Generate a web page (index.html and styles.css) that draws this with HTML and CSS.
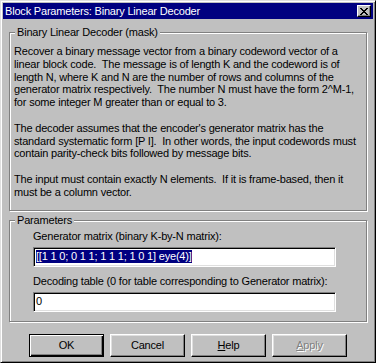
FILE: index.html
```html
<!DOCTYPE html>
<html lang="en">
<head>
  <meta charset="UTF-8">
  <title>Block Parameters: Binary Linear Decoder</title>
  <link rel="stylesheet" href="styles.css">
</head>
<body>
  <div class="window">
    <!-- title bar -->
    <div class="titlebar">
      <span class="title">Block Parameters: Binary Linear Decoder</span>
      <span class="close-btn">
        <svg width="8" height="7" viewBox="0 0 8 7" shape-rendering="crispEdges">
          <path fill="#000" d="M0 0h2v1H0zM6 0h2v1H6zM1 1h2v1H1zM5 1h2v1H5zM2 2h4v1H2zM3 3h2v1H3zM2 4h4v1H2zM1 5h2v1H1zM5 5h2v1H5zM0 6h2v1H0zM6 6h2v1H6z"/>
        </svg>
      </span>
    </div>

    <!-- mask description -->
    <fieldset class="group group-desc">
      <legend>Binary Linear Decoder (mask)</legend>
      <p>Recover a binary message vector from a binary codeword vector of a<br>
        linear block code.&nbsp; The message is of length K and the codeword is of<br>
        length N, where K and N are the number of rows and columns of the<br>
        generator matrix respectively.&nbsp; The number N must have the form 2^M-1,<br>
        for some integer M greater than or equal to 3.</p>
      <p>The decoder assumes that the encoder's generator matrix has the<br>
        standard systematic form [P I].&nbsp; In other words, the input codewords must<br>
        contain parity-check bits followed by message bits.</p>
      <p>The input must contain exactly N elements.&nbsp; If it is frame-based, then it<br>
        must be a column vector.</p>
    </fieldset>

    <!-- parameters -->
    <fieldset class="group group-params">
      <legend>Parameters</legend>
      <div class="field-label">Generator matrix (binary K-by-N matrix):</div>
      <div class="edit"><span class="selected">[[1 1 0; 0 1 1; 1 1 1; 1 0 1] eye(4)]</span></div>
      <div class="field-label">Decoding table (0 for table corresponding to Generator matrix):</div>
      <div class="edit">0</div>
    </fieldset>

    <!-- dialog buttons -->
    <div class="buttons">
      <button class="btn btn-default">OK</button>
      <button class="btn">Cancel</button>
      <button class="btn"><u>H</u>elp</button>
      <button class="btn btn-disabled"><u>A</u>pply</button>
    </div>
  </div>
</body>
</html>
```

FILE: styles.css
```css
/* reset */
* {
  margin: 0;
  padding: 0;
  box-sizing: border-box;
}
body {
  font-family: "Liberation Sans", Arial, sans-serif;
  font-size: 11px;
  letter-spacing: -0.19px;
  color: #000;
  background: #c0c0c0;
}
/* window frame */
.window {
  width: 376px;
  height: 363px;
  padding: 2px;
  background: #c0c0c0;
  border: 1px solid;
  border-color: #dfdfdf #000 #000 #dfdfdf;
  box-shadow: inset 1px 1px 0 #fff, inset -1px -1px 0 #808080;
}
.titlebar {
  height: 16px;
  background: #000080;
  color: #fff;
  display: flex;
  align-items: center;
  justify-content: space-between;
  padding: 0 2px 0 2px;
}
.title {
  font-size: 11px;
  line-height: 16px;
}
.close-btn {
  width: 14px;
  height: 12px;
  background: #c0c0c0;
  border: 1px solid;
  border-color: #fff #000 #000 #fff;
  box-shadow: inset -1px -1px 0 #808080;
  display: flex;
  align-items: center;
  justify-content: center;
}
.close-btn svg {
  display: block;
}
/* group boxes */
.group {
  margin: 7px 6px 0;
  padding: 6px 4px 11px;
  border: 1px solid #808080;
  box-shadow: inset 1px 1px 0 #fff, 1px 1px 0 #fff;
}
.group legend {
  padding: 0 2px;
  margin-left: 1px;
  line-height: 13px;
  background: #c0c0c0;
}
.group-desc p {
  line-height: 12.8px;
  white-space: nowrap;
  margin-bottom: 12.8px;
}
.group-desc p:last-child {
  margin-bottom: 0;
}
.group-params {
  margin-top: 3px;
  padding: 3px 4px 9px;
}
.field-label {
  margin-left: 19px;
  line-height: 13px;
  margin-bottom: 4px;
}
.edit + .field-label {
  margin-top: 8px;
}
.edit {
  margin-left: 19px;
  width: 303px;
  height: 20px;
  background: #fff;
  border: 1px solid;
  border-color: #808080 #fff #fff #808080;
  box-shadow: inset 1px 1px 0 #000, inset -1px -1px 0 #dfdfdf;
  padding: 0 2px;
  display: flex;
  align-items: center;
  line-height: 13px;
  white-space: nowrap;
}
.selected {
  background: #000080;
  color: #fff;
}
/* buttons */
.buttons {
  display: flex;
  gap: 6px;
  margin-top: 12px;
  padding-left: 26px;
}
.btn {
  width: 75px;
  height: 23px;
  font-family: inherit;
  font-size: 11px;
  letter-spacing: inherit;
  color: #000;
  background: #c0c0c0;
  border: 1px solid;
  border-color: #fff #000 #000 #fff;
  box-shadow: inset -1px -1px 0 #808080, inset 1px 1px 0 #dfdfdf;
}
.btn-default {
  border-color: #000;
  box-shadow: inset 1px 1px 0 #fff, inset -1px -1px 0 #000, inset -2px -2px 0 #808080;
}
.btn-disabled {
  color: #808080;
  text-shadow: 1px 1px 0 #fff;
}
```
